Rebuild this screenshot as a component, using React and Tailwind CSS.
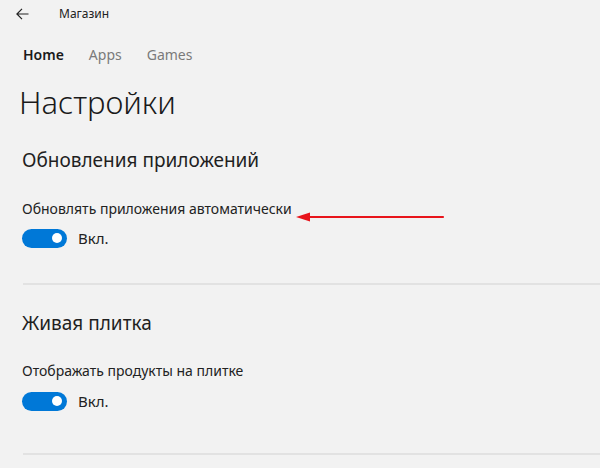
import { useState } from "react"

const Toggle = ({ on, onChange }) => (
  <div className="flex items-center gap-[11px]">
    <button
      onClick={() => onChange(!on)}
      className={`relative w-[45px] h-[19px] rounded-full flex items-center ${on ? "bg-[#0078d7] justify-end" : "border-2 border-[#333] justify-start"}`}
    >
      <span className={`w-[10px] h-[10px] rounded-full mx-[5px] ${on ? "bg-white" : "bg-[#333]"}`} />
    </button>
    <span className="text-[15px] leading-[20px] text-[#222]">{on ? "Вкл." : "Откл."}</span>
  </div>
)

export default function App() {
  const [autoUpdate, setAutoUpdate] = useState(true)
  const [liveTile, setLiveTile] = useState(true)

  return (
    <div className="relative min-h-screen bg-[#f2f2f2] text-[#1f1f1f]" style={{ fontFamily: "'Noto Sans', 'Open Sans', sans-serif" }}>
      {/* Title bar */}
      <div className="h-[28px] flex items-center">
        <svg className="ml-[16px] w-[13px] h-[12px]" viewBox="0 0 13 12" fill="none" stroke="#222" strokeWidth="1.2">
          <path d="M12.5 6H1M6 0.8L0.9 6 6 11.2" />
        </svg>
        <span className="ml-[30px] text-[12px] text-[#222]">Магазин</span>
      </div>

      {/* Tabs */}
      <div className="mt-[14px] pl-[23px] flex gap-[25px] h-[24px] items-center text-[14px]">
        <span className="font-semibold text-[#1a1a1a]">Home</span>
        <span className="text-[#7a7a7a]">Apps</span>
        <span className="text-[#7a7a7a]">Games</span>
      </div>

      <h1 className="mt-[16px] pl-[19px] text-[31px] leading-[40px] font-light text-[#1a1a1a]">Настройки</h1>

      {/* App updates */}
      <div className="pl-[22px]">
        <h2 className="mt-[24px] text-[19px] leading-[28px] text-[#1f1f1f]">Обновления приложений</h2>
        <p className="mt-[25px] text-[14px] leading-[20px] text-[#222]">Обновлять приложения автоматически</p>
        <div className="mt-[9px]">
          <Toggle on={autoUpdate} onChange={setAutoUpdate} />
        </div>
      </div>
      <div className="mt-[35px] ml-[23px] h-[2px] bg-[#e2e2e2]" />

      {/* Live tile */}
      <div className="pl-[22px]">
        <h2 className="mt-[24px] text-[19px] leading-[28px] text-[#1f1f1f]">Живая плитка</h2>
        <p className="mt-[24px] text-[14px] leading-[20px] text-[#222]">Отображать продукты на плитке</p>
        <div className="mt-[10px]">
          <Toggle on={liveTile} onChange={setLiveTile} />
        </div>
      </div>
      <div className="mt-[42px] ml-[23px] h-[2px] bg-[#e2e2e2]" />

      {/* Annotation arrow */}
      <svg className="absolute left-[295px] top-[210px] w-[150px] h-[14px]" viewBox="0 0 150 14">
        <path d="M12 7H148" stroke="#e8141b" strokeWidth="2.2" strokeLinecap="round" />
        <path d="M1 7L15 2.5V11.5Z" fill="#e8141b" />
      </svg>
    </div>
  )
}
